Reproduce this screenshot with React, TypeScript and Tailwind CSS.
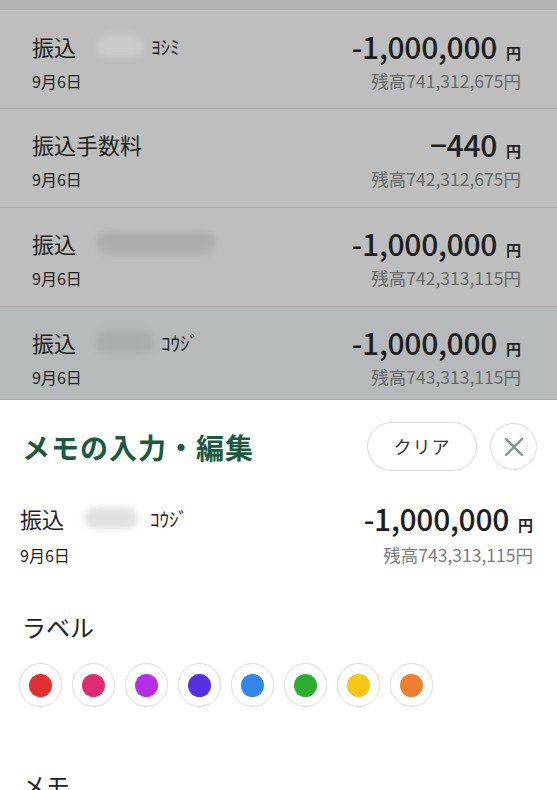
import React from 'react';

const FONT = '"Noto Sans CJK JP", "Noto Sans", sans-serif';

interface Txn {
  title: string;
  kana?: string;
  blob: string; // blob width/colour classes
  amount: string;
  balance: string;
  bg: string;
  h: string;
}

const txns: Txn[] = [
  { title: '振込', kana: 'ﾖｼﾐ', blob: 'w-[46px] bg-[#cbcbcb]', amount: '-1,000,000', balance: '残高741,312,675円', bg: 'bg-[#bdbebd]', h: 'h-[98px]' },
  { title: '振込手数料', blob: '', amount: '−440', balance: '残高742,312,675円', bg: 'bg-[#bdbebd]', h: 'h-[99px]' },
  { title: '振込', kana: '', blob: 'w-[118px] bg-[#acadac]', amount: '-1,000,000', balance: '残高742,313,115円', bg: 'bg-[#bdbebd]', h: 'h-[99px]' },
  { title: '振込', kana: 'ｺｳｼﾞ', blob: 'w-[56px] bg-[#a9adad]', amount: '-1,000,000', balance: '残高743,313,115円', bg: 'bg-[#b6baba]', h: 'h-[93px]' },
];

const labelColors = ['#e22f2f', '#e02d72', '#b52fe6', '#5530e2', '#3586ea', '#2dad2d', '#f6c619', '#ea8030'];

const Amount: React.FC<{ value: string }> = ({ value }) => (
  <div className="flex items-baseline">
    <span className="text-[30px] font-medium leading-[34px] tracking-[-0.3px]">{value}</span>
    <span className="ml-[9px] text-[15px] font-bold leading-none">円</span>
  </div>
);

const Row: React.FC<{ t: Txn }> = ({ t }) => (
  <div className={`${t.h} shrink-0 ${t.bg} border-b border-[#a8a9a8] pl-[32px] pr-[36px] pt-[18px] text-[#1e1f1f] overflow-hidden`}>
    <div className="flex items-center justify-between h-[34px]">
      <div className="flex items-center">
        <span className="text-[22px] leading-none">{t.title}</span>
        {t.blob && (
          <span className={`ml-[21px] h-[22px] rounded-full blur-[3px] ${t.blob}`} />
        )}
        {t.kana && <span className="ml-[8px] text-[19px] leading-none">{t.kana}</span>}
      </div>
      <Amount value={t.amount} />
    </div>
    <div className="mt-[7px] flex items-center justify-between h-[22px]">
      <span className="text-[16px]">9月6日</span>
      <span className="text-[17.5px] text-[#686b6a]">{t.balance}</span>
    </div>
  </div>
);

export default function App() {
  return (
    <div className="w-[557px] h-[790px] overflow-hidden flex flex-col bg-white" style={{ fontFamily: FONT }}>
      <div className="h-[11px] shrink-0 bg-[#b2b3b2] border-b border-[#c2c3c2]" />
      {txns.map((t, i) => (
        <Row key={i} t={t} />
      ))}

      {/* bottom sheet */}
      <div className="flex-1 shrink-0 bg-white pl-[22px] pr-[20px] pt-[22px]">
        <div className="flex items-center justify-between h-[49px]">
          <h2 className="text-[28px] font-bold text-[#1b5a3f] tracking-[1px]">メモの入力・編集</h2>
          <div className="flex items-center gap-[13px]">
            <button className="w-[110px] h-[49px] rounded-full border border-[#d9dcdb] text-[18px] text-[#333] tracking-[1px]">
              クリア
            </button>
            <button className="w-[47px] h-[47px] rounded-full border border-[#d9dcdb] flex items-center justify-center">
              <svg width="20" height="20" viewBox="0 0 20 20" fill="none" stroke="#7e968c" strokeWidth="2.4" strokeLinecap="round">
                <path d="M2 2L18 18M18 2L2 18" />
              </svg>
            </button>
          </div>
        </div>

        <div className="mt-[30px] pr-[4px] text-[#1f1f1f] -ml-[2px]">
          <div className="flex items-center justify-between h-[34px]">
            <div className="flex items-center">
              <span className="text-[22px] leading-none">振込</span>
              <span className="ml-[20px] w-[54px] h-[22px] rounded-full blur-[3px] bg-[#e2e2e2]" />
              <span className="ml-[12px] text-[19px] leading-none">ｺｳｼﾞ</span>
            </div>
            <Amount value="-1,000,000" />
          </div>
          <div className="mt-[9px] flex items-center justify-between h-[22px]">
            <span className="text-[16px]">9月6日</span>
            <span className="text-[17.5px] text-[#7a7d7c]">残高743,313,115円</span>
          </div>
        </div>

        <div className="mt-[45px] text-[24px] leading-[32px] text-[#222]">ラベル</div>
        <div className="mt-[20px] -ml-[3px] flex gap-[10px]">
          {labelColors.map((c) => (
            <div key={c} className="w-[43px] h-[44px] rounded-full border border-[#dcdcdc] flex items-center justify-center">
              <span className="w-[23px] h-[23px] rounded-full" style={{ backgroundColor: c }} />
            </div>
          ))}
        </div>

        <div className="mt-[62px] text-[24px] leading-[32px] text-[#222]">メモ</div>
      </div>
    </div>
  );
}
